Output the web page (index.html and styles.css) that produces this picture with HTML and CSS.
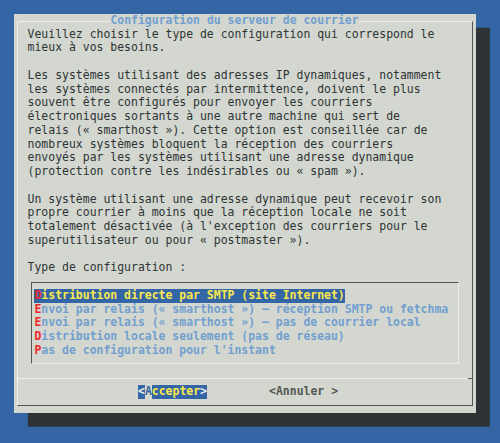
FILE: index.html
```html
<!DOCTYPE html>
<html lang="fr">
<head>
<meta charset="utf-8">
<title>Configuration du serveur de courrier</title>
<link rel="stylesheet" href="styles.css">
</head>
<body>
<div class="screen">
  <div class="dialog">
    <div class="frame">
      <div class="title">Configuration du serveur de courrier</div>
      <div class="content">
        <div class="body">Veuillez choisir le type de configuration qui correspond le
mieux à vos besoins.

Les systèmes utilisant des adresses IP dynamiques, notamment
les systèmes connectés par intermittence, doivent le plus
souvent être configurés pour envoyer les courriers
électroniques sortants à une autre machine qui sert de
relais (« smarthost »). Cette option est conseillée car de
nombreux systèmes bloquent la réception des courriers
envoyés par les systèmes utilisant une adresse dynamique
(protection contre les indésirables ou « spam »).

Un système utilisant une adresse dynamique peut recevoir son
propre courrier à moins que la réception locale ne soit
totalement désactivée (à l'exception des courriers pour le
superutilisateur ou pour « postmaster »).

Type de configuration :</div>
        <div class="listwrap">
          <div class="listbox">
            <div class="item"><span class="hl"><span class="key">D</span>istribution directe par SMTP (site Internet)</span></div>
            <div class="item"><span class="key">E</span>nvoi par relais (« smarthost ») — réception SMTP ou fetchma</div>
            <div class="item"><span class="key">E</span>nvoi par relais (« smarthost ») — pas de courrier local</div>
            <div class="item"><span class="key">D</span>istribution locale seulement (pas de réseau)</div>
            <div class="item"><span class="key">P</span>as de configuration pour l'instant</div>
          </div>
        </div>
      </div>
      <div class="sep"></div>
      <div class="buttons">
        <span class="btn active"><span class="bracket">&lt;</span><span class="cursor">A</span>ccepter<span class="bracket">&gt;</span></span>
        <span class="btn">&lt;Annuler &gt;</span>
      </div>
    </div>
  </div>
</div>
</body>
</html>
```
FILE: styles.css
```css
html, body {
  margin: 0;
  height: 100%;
}
body {
  background: #3465a4;
  font-family: "DejaVu Sans Mono", monospace;
  font-size: 11.46px;
  line-height: 13.75px;
  color: #2e3436;
  overflow: hidden;
}
.screen {
  padding: 13.75px 0 0 13.8px;
}
.dialog {
  width: 462.3px;
  height: 398.75px;
  box-sizing: border-box;
  background: #d3d7cf;
  box-shadow: 13.8px 13.75px 0 #2e3436;
  padding: 6.875px 3.45px;
}
.frame {
  height: 100%;
  box-sizing: border-box;
  border: 1px solid;
  border-color: #eeeeec #555753 #555753 #eeeeec;
  padding-top: 5.875px;
}
.title {
  width: fit-content;
  margin: -13.75px 0 0 92.15px;
  height: 13.75px;
  background: #d3d7cf;
  color: #729fcf;
  font-weight: bold;
  white-space: pre;
}
.content {
  padding-left: 9.35px;
}
.body {
  white-space: pre;
}
.listwrap {
  padding: 6.875px 0;
}
.listbox {
  margin-left: 3.45px;
  width: 428.3px;
  box-sizing: border-box;
  border: 1px solid;
  border-color: #555753 #eeeeec #eeeeec #555753;
  padding: 5.875px 0 5.875px 2.45px;
}
.item {
  height: 13.75px;
  white-space: pre;
  overflow: hidden;
  color: #729fcf;
  font-weight: bold;
}
.key {
  color: #ef2929;
}
.hl {
  display: inline-block;
  height: 13.75px;
  background: #3465a4;
  color: #fce94f;
}
.sep {
  height: 13.75px;
  display: flex;
  align-items: center;
}
.sep::before {
  content: "";
  flex: 1;
  height: 1px;
  background: #eeeeec;
}
.sep::after {
  content: "";
  width: 3.45px;
  height: 1px;
  background: #555753;
}
.buttons {
  display: flex;
  gap: 62.1px;
  padding-left: 119.75px;
  height: 13.75px;
  white-space: pre;
}
.btn {
  height: 13.75px;
  color: #555753;
  font-weight: bold;
}
.btn.active {
  display: flex;
  background: #3465a4;
  color: #fce94f;
}
.bracket {
  color: #eeeeec;
}
.cursor {
  background: #d3d7cf;
  color: #3465a4;
}
```
